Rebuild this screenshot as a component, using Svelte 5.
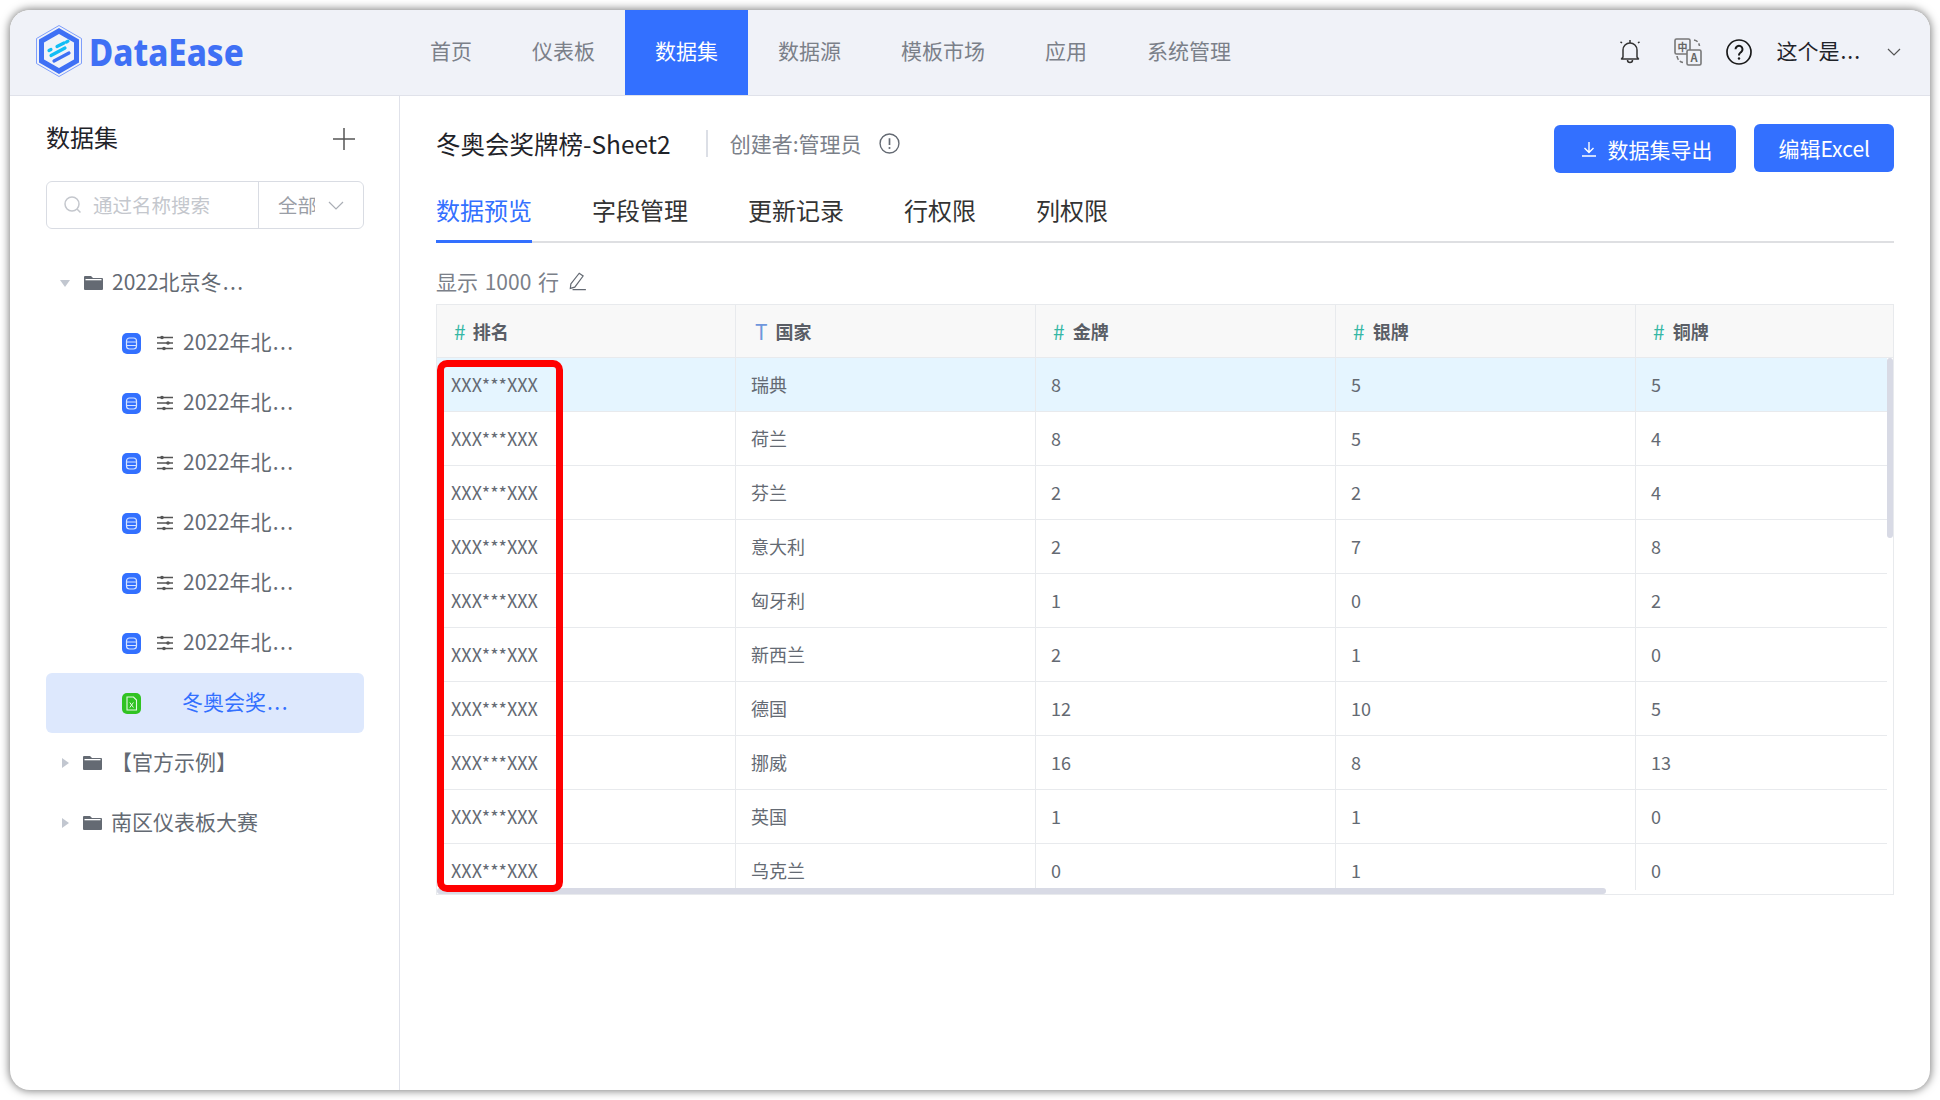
<script lang="ts">
  const nav = ['首页', '仪表板', '数据集', '数据源', '模板市场', '应用', '系统管理']
  const tabs = ['数据预览', '字段管理', '更新记录', '行权限', '列权限']
  const columns = [
    { type: '#', name: '排名' },
    { type: 'T', name: '国家' },
    { type: '#', name: '金牌' },
    { type: '#', name: '银牌' },
    { type: '#', name: '铜牌' }
  ]
  const rows = [
    ['瑞典', 8, 5, 5],
    ['荷兰', 8, 5, 4],
    ['芬兰', 2, 2, 4],
    ['意大利', 2, 7, 8],
    ['匈牙利', 1, 0, 2],
    ['新西兰', 2, 1, 0],
    ['德国', 12, 10, 5],
    ['挪威', 16, 8, 13],
    ['英国', 1, 1, 0],
    ['乌克兰', 0, 1, 0]
  ]
  const datasets = [1, 2, 3, 4, 5, 6]
</script>

{#snippet folder()}
  <svg class="folder" viewBox="0 0 19 14" width="19" height="14">
    <path d="M1 0h6l2 2h9a1 1 0 0 1 1 1v10a1 1 0 0 1-1 1H1a1 1 0 0 1-1-1V1a1 1 0 0 1 1-1z" fill="#646a73" />
    <rect x="1.5" y="3" width="16" height="1.3" fill="#fff" />
  </svg>
{/snippet}

<div class="window">
  <header class="topbar">
    <div class="logo">
      <svg class="logo-mark" viewBox="0 0 46 52" width="46" height="52">
        <path d="M23 .5 45.5 13.5v25L23 51.5 .5 38.5v-25z" fill="none" stroke="#7f9ffb" stroke-width="1" />
        <path d="M23 6 40.5 16v20L23 46 5.5 36V16z" fill="#f0f2f8" stroke="#3f70f5" stroke-width="5" />
        <g stroke-linecap="round" stroke-width="3.2">
          <path d="M21 21.5l7-3.5M30.5 17l1.5-.8" stroke="#12bdf5" />
          <path d="M13 25.5l2-1M15 30.5l14-7.5" stroke="#12bdf5" />
          <path d="M18 36l15-8" stroke="#3f70f5" />
        </g>
      </svg>
      <span class="logo-text">DataEase</span>
    </div>
    <nav class="nav">
      {#each nav as item}
        <span class="nav-item" class:active={item === '数据集'}>{item}</span>
      {/each}
    </nav>
    <div class="tools">
      <svg class="bell" viewBox="0 0 22 26" width="22" height="26" fill="none" stroke="#333" stroke-width="1.5">
        <path d="M4 18V11a7 7 0 0 1 14 0v7l1.5 2h-17z" stroke-linejoin="round" />
        <path d="M8.5 21a2.5 2.5 0 0 0 5 0M11 1v3M3 4 1.5 2.8M19 4l1.5-1.2" />
      </svg>
      <svg class="lang" viewBox="0 0 28 28" width="28" height="28" fill="none" stroke="#777" stroke-width="1.6">
        <rect x="1" y="1" width="15" height="15" rx="1.5" fill="#f0f2f8" />
        <rect x="13" y="12" width="14" height="15" rx="1.5" fill="#f0f2f8" />
        <path d="M20 2c3 .5 5 2.5 5.5 6M3 18c.5 3.5 2.5 5.8 6 6.5" stroke-dasharray="4 2" />
        <text x="8.5" y="12.5" class="lang-zh" text-anchor="middle">中</text>
        <text x="20" y="24" class="lang-a" text-anchor="middle">A</text>
      </svg>
      <svg class="help" viewBox="0 0 26 26" width="26" height="26" fill="none" stroke="#1a1a1a" stroke-width="1.7">
        <circle cx="13" cy="13" r="12" />
        <path d="M9.5 10.3a3.5 3.5 0 1 1 5.6 2.8c-1.3 1-2.1 1.5-2.1 3v.4" stroke-width="2" />
        <circle cx="13" cy="19.5" r="1.2" fill="#1a1a1a" stroke="none" />
      </svg>
      <span class="user">这个是<span class="dots">...</span></span>
      <svg class="user-caret" viewBox="0 0 14 8" width="14" height="8" fill="none" stroke="#555" stroke-width="1.2">
        <path d="M1 1l6 6 6-6" />
      </svg>
    </div>
  </header>

  <div class="body">
    <aside class="sidebar">
      <div class="side-head">
        <span class="side-title">数据集</span>
        <svg viewBox="0 0 22 22" width="22" height="22" stroke="#555" stroke-width="1.5">
          <path d="M11 0v22M0 11h22" />
        </svg>
      </div>
      <div class="search">
        <div class="search-input">
          <svg viewBox="0 0 18 18" width="18" height="18" fill="none" stroke="#c4c7cd" stroke-width="1.5">
            <circle cx="8" cy="8" r="7" />
            <path d="M13 13l3.5 3.5" />
          </svg>
          <span class="search-text">通过名称搜索</span>
        </div>
        <div class="search-type">
          <span class="type-label">全部</span>
          <svg viewBox="0 0 16 9" width="16" height="9" fill="none" stroke="#aaaeb5" stroke-width="1.2">
            <path d="M1 1l7 7 7-7" />
          </svg>
        </div>
      </div>

      <div class="tree">
        <div class="tree-row">
          <span class="arrow down"></span>
          {@render folder()}
          <span class="name">2022北京冬<span class="dots">...</span></span>
        </div>
        {#each datasets as id (id)}
          <div class="tree-row child">
            <svg class="node-icon" viewBox="0 0 19 21" width="19" height="21">
              <rect width="19" height="21" rx="5" fill="#3370ff" />
              <g fill="none" stroke="#d8e4ff" stroke-width="1.2">
                <rect x="4.5" y="5" width="10" height="11" rx="3" />
                <path d="M4.5 9h10M4.5 12.5h10" />
              </g>
            </svg>
            <svg class="sliders" viewBox="0 0 16 16" width="16" height="16" stroke="#555" stroke-width="1.4">
              <path d="M0 2.5h16M0 8h16M0 13.5h16" />
              <circle cx="5" cy="2.5" r="1.8" fill="#555" stroke="none" />
              <circle cx="11" cy="8" r="1.8" fill="#555" stroke="none" />
              <circle cx="7" cy="13.5" r="1.8" fill="#555" stroke="none" />
            </svg>
            <span class="name">2022年北<span class="dots">...</span></span>
          </div>
        {/each}
        <div class="tree-row child active">
          <svg class="node-icon" viewBox="0 0 19 21" width="19" height="21">
            <rect width="19" height="21" rx="5" fill="#30c322" />
            <path d="M5 4h6.5L14.5 7v10H5z" fill="none" stroke="#e6f9e4" stroke-width="1.1" />
            <path d="M7.8 9.5l3.6 5M11.4 9.5l-3.6 5" stroke="#e6f9e4" stroke-width="1" />
          </svg>
          <span class="name excel">冬奥会奖<span class="dots">...</span></span>
        </div>
        <div class="tree-row">
          <span class="arrow right"></span>
          {@render folder()}
          <span class="name">【官方示例】</span>
        </div>
        <div class="tree-row">
          <span class="arrow right"></span>
          {@render folder()}
          <span class="name">南区仪表板大赛</span>
        </div>
      </div>
    </aside>

    <main class="main">
      <div class="title-row">
        <h1>冬奥会奖牌榜-Sheet2</h1>
        <span class="creator">创建者:管理员</span>
        <svg class="info" viewBox="0 0 20 20" width="21" height="21" fill="none" stroke="#646a73" stroke-width="1.3">
          <circle cx="10" cy="10" r="9" />
          <path d="M10 5v6.5" stroke-width="1.6" />
          <circle cx="10" cy="14.3" r="1" fill="#646a73" stroke="none" />
        </svg>
        <div class="actions">
          <button class="btn export">
            <svg viewBox="0 0 16 16" width="16" height="16" fill="none" stroke="#fff" stroke-width="1.4">
              <path d="M8 1v10M3.5 7 8 11.5 12.5 7M1 15h14" />
            </svg>
            数据集导出
          </button>
          <button class="btn">编辑Excel</button>
        </div>
      </div>

      <div class="tabs">
        {#each tabs as tab, i}
          <span class="tab" class:active={i === 0}>{tab}</span>
        {/each}
      </div>

      <div class="row-limit">
        <span>显示 1000 行</span>
        <svg viewBox="0 0 18 18" width="20" height="20" fill="none" stroke="#646a73" stroke-width="1.1">
          <path d="M3.5 11.5 11 2l3.5 2.5L7 14.5l-4 1.2zM5 16.700h12" />
        </svg>
      </div>

      <div class="table">
        <div class="thead">
          {#each columns as col}
            <div class="th">
              <span class="type" class:text={col.type === 'T'}>{col.type}</span>
              <span>{col.name}</span>
            </div>
          {/each}
        </div>
        <div class="tbody">
          {#each rows as row, i}
            <div class="tr" class:selected={i === 0}>
              <div class="td">XXX***XXX</div>
              {#each row as value}
                <div class="td">{value}</div>
              {/each}
            </div>
          {/each}
        </div>
        <div class="scroll-x"></div>
        <div class="scroll-y"></div>
        <div class="highlight"></div>
      </div>
    </main>
  </div>
</div>

<style>
  :global(body) {
    margin: 0;
    background: #fff;
  }

  .window {
    width: 1920px;
    height: 1080px;
    margin: 10px;
    border-radius: 20px;
    overflow: hidden;
    background: #fff;
    box-shadow: 0 0 9px 1px rgba(0, 0, 0, 0.5);
    display: flex;
    flex-direction: column;
    font-family: "Noto Sans CJK SC", "Noto Sans", sans-serif;
    color: #1f2329;
  }

  .dots {
    letter-spacing: 1.5px;
    margin-left: 1px;
  }

  .topbar {
    height: 86px;
    box-sizing: border-box;
    flex-shrink: 0;
    background: #f0f2f8;
    border-bottom: 1px solid #e0e2ea;
    display: flex;
    align-items: stretch;
  }

  .logo {
    width: 388px;
    flex-shrink: 0;
    padding-left: 26px;
    box-sizing: border-box;
    display: flex;
    align-items: center;
    gap: 7px;
  }

  .logo-mark {
    margin-bottom: 3px;
  }

  .logo-text {
    font-family: "Noto Sans", sans-serif;
    font-size: 38px;
    font-weight: 800;
    color: #3f70f5;
    white-space: nowrap;
    transform: scaleX(0.87);
    transform-origin: left center;
    padding-bottom: 3px;
  }

  .nav {
    display: flex;
    margin-left: 2px;
  }

  .nav-item {
    padding: 0 30px 6px;
    display: flex;
    align-items: center;
    font-size: 21px;
    color: #7b8089;
  }

  .nav-item.active {
    background: #3370ff;
    color: #fff;
  }

  .tools {
    margin-left: auto;
    padding-right: 29px;
    display: flex;
    align-items: center;
    padding-bottom: 2px;
  }

  .bell { margin-right: 33px; }
  .lang { margin-right: 24px; }
  .help { margin-right: 24px; }

  .lang-zh {
    font-size: 10px;
    font-weight: 700;
    fill: #666;
    stroke: none;
  }

  .lang-a {
    font-size: 11px;
    font-weight: 700;
    fill: #666;
    stroke: none;
  }

  .user {
    font-size: 21px;
    color: #1f2329;
    margin-right: 26px;
    white-space: nowrap;
    padding-bottom: 3px;
  }

  .user .dots {
    letter-spacing: 1px;
  }

  .body {
    flex: 1;
    display: flex;
    min-height: 0;
  }

  .sidebar {
    width: 390px;
    box-sizing: border-box;
    flex-shrink: 0;
    border-right: 1px solid #e0e2ea;
    padding: 0 35px 0 36px;
  }

  .side-head {
    height: 85px;
    box-sizing: border-box;
    display: flex;
    align-items: center;
    justify-content: space-between;
    font-size: 24px;
    color: #1f2329;
    padding-right: 9px;
  }

  .side-title {
    padding-bottom: 5px;
  }

  .search {
    height: 48px;
    box-sizing: border-box;
    border: 1px solid #d9dce3;
    border-radius: 6px;
    display: flex;
    font-size: 19.5px;
  }

  .search-input {
    width: 212px;
    border-right: 1px solid #d9dce3;
    display: flex;
    align-items: center;
    gap: 11px;
    padding-left: 17px;
    box-sizing: border-box;
    color: #c4c7cd;
    white-space: nowrap;
  }

  .search-text {
    padding-bottom: 2px;
  }

  .search-type {
    flex: 1;
    display: flex;
    align-items: center;
    gap: 13px;
    padding-left: 19px;
    color: #9a9ea6;
  }

  .type-label {
    width: 37px;
    overflow: hidden;
    white-space: nowrap;
    padding-bottom: 2px;
  }

  .tree {
    margin-top: 24px;
  }

  .tree-row {
    height: 60px;
    display: flex;
    align-items: center;
    font-size: 21px;
    color: #646a73;
    padding-left: 14px;
    white-space: nowrap;
  }

  .tree-row .name {
    margin-left: 9px;
    padding-bottom: 4px;
  }

  .tree-row.child {
    padding-left: 76px;
  }

  .tree-row.child .name {
    margin-left: 10px;
  }

  .tree-row.child .sliders {
    margin-left: 16px;
  }

  .tree-row.active {
    background: #dde8fd;
    border-radius: 6px;
    color: #3370ff;
  }

  .tree-row.child .excel {
    margin-left: 41px;
  }

  .arrow {
    width: 0;
    height: 0;
    border-style: solid;
  }

  .arrow.down {
    border-width: 7px 5.5px 0;
    border-color: #c2c7d0 transparent transparent;
    margin-right: 14px;
  }

  .arrow.right {
    border-width: 5.5px 0 5.5px 7px;
    border-color: transparent transparent transparent #c2c7d0;
    margin-left: 2px;
    margin-right: 14px;
  }

  .main {
    flex: 1;
    min-width: 0;
    padding: 0 36px;
  }

  .title-row {
    height: 87px;
    display: flex;
    align-items: center;
  }

  h1 {
    margin: 7px 0 0;
    font-size: 24.5px;
    font-weight: 400;
    color: #1f2329;
    padding-right: 59px;
    position: relative;
    white-space: nowrap;
  }

  h1::after {
    content: '';
    position: absolute;
    right: 22px;
    top: 4px;
    bottom: 4px;
    width: 2px;
    background: #dcdfe6;
  }

  .creator {
    margin-top: 7px;
    font-size: 21px;
    color: #7b8089;
    margin-right: 17px;
    white-space: nowrap;
  }

  .info {
    margin-top: 7px;
  }

  .actions {
    margin-left: auto;
    align-self: flex-start;
    margin-top: 28px;
    display: flex;
    align-items: flex-start;
    gap: 18px;
  }

  .btn {
    height: 48px;
    padding: 0 24px;
    border: none;
    border-radius: 6px;
    background: #3370ff;
    color: #fff;
    font-family: inherit;
    font-size: 21px;
    display: flex;
    align-items: center;
    gap: 10px;
  }

  .btn.export {
    margin-top: 1px;
    padding: 0 24px 0 27px;
  }

  .tabs {
    height: 60px;
    box-sizing: border-box;
    border-bottom: 2px solid #dedfe2;
    display: flex;
    gap: 60px;
    font-size: 24px;
    color: #333;
  }

  .tab {
    display: flex;
    align-items: center;
    height: 60px;
    box-sizing: border-box;
    padding-bottom: 7px;
  }

  .tab.active {
    color: #3370ff;
    box-shadow: inset 0 -3px 0 #3370ff;
  }

  .row-limit {
    height: 61px;
    box-sizing: border-box;
    padding-top: 15px;
    display: flex;
    align-items: center;
    gap: 8px;
    font-size: 21px;
    word-spacing: 2px;
    color: #7b8089;
  }

  .table {
    position: relative;
    height: 591px;
    box-sizing: border-box;
    border: 1px solid #e8eaed;
    overflow: hidden;
    font-size: 18px;
    color: #646a73;
  }

  .thead {
    display: flex;
    height: 53px;
    box-sizing: border-box;
    background: #f8f8f8;
    border-bottom: 1px solid #e8eaed;
    font-weight: 700;
  }

  .th {
    width: 300px;
    flex-shrink: 0;
    box-sizing: border-box;
    border-right: 1px solid #e8eaed;
    display: flex;
    align-items: center;
    gap: 8px;
    padding-left: 17px;
    color: #5a5e66;
  }

  .th:first-child {
    width: 299px;
    gap: 7px;
  }

  .th:last-child {
    flex: 1;
    border-right: none;
  }

  .type {
    font-weight: 400;
    font-size: 21px;
    color: #35b7a5;
  }

  .type.text {
    color: #6f96dc;
    padding-left: 2px;
  }

  .tbody {
    height: 532px;
    overflow: hidden;
    padding-right: 6px;
  }

  .tr {
    display: flex;
    height: 54px;
    box-sizing: border-box;
    border-bottom: 1px solid #e8eaed;
  }

  .tr.selected {
    background: #e5f5ff;
  }

  .td {
    width: 300px;
    flex-shrink: 0;
    box-sizing: border-box;
    border-right: 1px solid #e8eaed;
    padding: 0 0 1px 15px;
    display: flex;
    align-items: center;
    white-space: nowrap;
  }

  .td:first-child {
    width: 299px;
    padding-left: 14px;
  }

  .td:last-child {
    width: auto;
    flex: 1;
    border-right: none;
  }

  .scroll-x {
    position: absolute;
    left: 0;
    bottom: 0;
    width: 1169px;
    height: 6px;
    border-radius: 3px;
    background: #d8dae5;
  }

  .scroll-y {
    position: absolute;
    right: 0;
    top: 53px;
    width: 6px;
    height: 180px;
    border-radius: 3px;
    background: #d8dae5;
  }

  .highlight {
    position: absolute;
    left: 0;
    top: 55px;
    width: 126px;
    height: 532px;
    box-sizing: border-box;
    border: 7px solid #ff0000;
    border-radius: 10px;
  }
</style>
